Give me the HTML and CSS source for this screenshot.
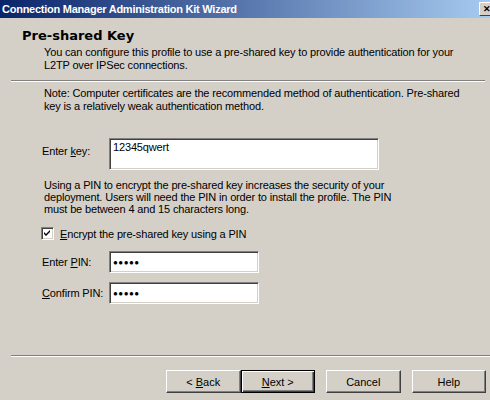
FILE: index.html
```html
<!DOCTYPE html>
<html lang="en">
<head>
  <meta charset="UTF-8" />
  <title>Connection Manager Administration Kit Wizard</title>
  <link rel="stylesheet" href="styles.css">
</head>
<body>
  <div class="window">
    <div class="titlebar">
      <span class="title">Connection Manager Administration Kit Wizard</span>
      <span class="close-btn">✕</span>
    </div>

    <div class="header">
      <h1>Pre-shared Key</h1>
      <p>You can configure this profile to use a pre-shared key to provide authentication for your L2TP over IPSec connections.</p>
    </div>
    <div class="etched"></div>

    <div class="content">
      <p class="note">Note: Computer certificates are the recommended method of authentication. <span class="nowrap">Pre-shared</span> key is a relatively weak authentication method.</p>

      <div class="row key-row">
        <label for="key">Enter <u>k</u>ey:</label>
        <input type="text" id="key" class="field key-field" value="12345qwert" />
      </div>

      <p class="pin-info">Using a PIN to encrypt the pre-shared key increases the security of your deployment. Users will need the PIN in order to install the profile. The PIN must be between 4 and 15 characters long.</p>

      <div class="check-row">
        <span class="checkbox">
          <svg width="7" height="7" viewBox="0 0 7 7"><path d="M0 2 L2 4 L6 0 L6 2 L2 6 L0 4 Z" fill="#000"/></svg>
        </span>
        <span><u>E</u>ncrypt the pre-shared key using a PIN</span>
      </div>

      <div class="row pin-row">
        <label for="pin">Enter <u>P</u>IN:</label>
        <div class="field pin-field" id="pin"><span class="dots">●●●●●</span></div>
      </div>
      <div class="row pin-row">
        <label for="pin2"><u>C</u>onfirm PIN:</label>
        <div class="field pin-field" id="pin2"><span class="dots">●●●●●</span></div>
      </div>
    </div>

    <div class="etched bottom"></div>

    <div class="buttons">
      <button class="btn">&lt; <u>B</u>ack</button>
      <button class="btn default"><u>N</u>ext &gt;</button>
      <button class="btn gap">Cancel</button>
      <button class="btn gap">Help</button>
    </div>
  </div>
</body>
</html>
```

FILE: styles.css
```css
html, body {
  margin: 0;
  padding: 0;
}
body {
  background: #d4d0c8;
  font-family: 'Liberation Sans', Arial, sans-serif;
  font-size: 11px;
  letter-spacing: -0.15px;
  color: #000;
  width: 490px;
  height: 400px;
  overflow: hidden;
}
.window {
  display: flex;
  flex-direction: column;
  height: 400px;
}
.titlebar {
  height: 18px;
  background: linear-gradient(to right, #0a246a, #a6caf0);
  display: flex;
  align-items: center;
  justify-content: space-between;
  overflow: hidden;
}
.title {
  color: #fff;
  font-family: 'Liberation Sans', Arial, sans-serif;
  font-weight: bold;
  font-size: 11px;
  letter-spacing: -0.25px;
  padding-left: 2px;
}
.close-btn {
  width: 14px;
  height: 12px;
  margin-right: -5px;
  background: #d4d0c8;
  border-top: 1px solid #fff;
  border-left: 1px solid #fff;
  border-right: 1px solid #404040;
  border-bottom: 1px solid #404040;
  font-size: 9px;
  font-weight: bold;
  line-height: 12px;
  text-align: center;
  color: #000;
}
.header {
  padding: 10px 20px 0 22px;
  height: 52px;
}
.header h1 {
  font-family: 'DejaVu Sans', Verdana, sans-serif;
  font-size: 13px;
  font-weight: bold;
  letter-spacing: 0;
  margin: 0 0 3px;
}
.header p {
  margin: 0 0 0 22px;
  line-height: 13px;
}
.etched {
  margin-left: 11px;
  margin-right: 5px;
  border-top: 1px solid #808080;
  border-bottom: 1px solid #fff;
}
.etched.bottom {
  margin-right: 0;
  margin-top: auto;
}
.content {
  padding: 5px 20px 0 44px;
}
.content p {
  margin: 0;
}
.nowrap {
  white-space: nowrap;
}
.note {
  width: 430px;
  line-height: 13px;
}
.row {
  display: flex;
  align-items: center;
  margin-left: -2px;
}
.row label {
  width: 67px;
}
.key-row {
  margin-top: 25px;
  align-items: flex-start;
}
.key-row label {
  padding-top: 7px;
}
.field {
  box-sizing: border-box;
  background: #fff;
  border-top: 1px solid #808080;
  border-left: 1px solid #808080;
  border-right: 1px solid #fff;
  border-bottom: 1px solid #fff;
  box-shadow: inset 1px 1px 0 #404040, inset -1px -1px 0 #d4d0c8;
  font-family: 'Liberation Sans', Arial, sans-serif;
  font-size: 11px;
  letter-spacing: -0.15px;
  color: #000;
}
.key-field {
  width: 270px;
  height: 32px;
  padding: 0 3px 14px;
  margin: 0;
  outline: none;
}
.pin-info {
  margin-top: 9px !important;
  width: 350px;
  line-height: 12px;
}
.check-row {
  display: flex;
  align-items: center;
  gap: 6px;
  margin: 12px 0 0 -3px;
}
.checkbox {
  box-sizing: border-box;
  width: 13px;
  height: 13px;
  background: #fff;
  border-top: 1px solid #808080;
  border-left: 1px solid #808080;
  border-right: 1px solid #fff;
  border-bottom: 1px solid #fff;
  box-shadow: inset 1px 1px 0 #404040, inset -1px -1px 0 #d4d0c8;
  display: flex;
  align-items: center;
  justify-content: center;
}
.pin-row {
  margin-top: 11px;
}
.pin-row + .pin-row {
  margin-top: 9px;
}
.pin-field {
  width: 150px;
  height: 22px;
  display: flex;
  align-items: center;
  padding-left: 3px;
}
.dots {
  font-size: 8px;
  letter-spacing: 0.5px;
}
.buttons {
  display: flex;
  padding: 13px 4px 7px 166px;
}
.btn {
  box-sizing: border-box;
  width: 75px;
  height: 23px;
  padding: 0;
  margin: 0;
  background: #d4d0c8;
  font-family: 'Liberation Sans', Arial, sans-serif;
  font-size: 11px;
  color: #000;
  border-top: 1px solid #fff;
  border-left: 1px solid #fff;
  border-right: 1px solid #404040;
  border-bottom: 1px solid #404040;
  box-shadow: inset -1px -1px 0 #808080;
}
.btn.default {
  border: 1px solid #000;
  box-shadow: inset 1px 1px 0 #fff, inset -1px -1px 0 #404040, inset -2px -2px 0 #808080;
}
.btn.gap {
  margin-left: 11px;
}
```
